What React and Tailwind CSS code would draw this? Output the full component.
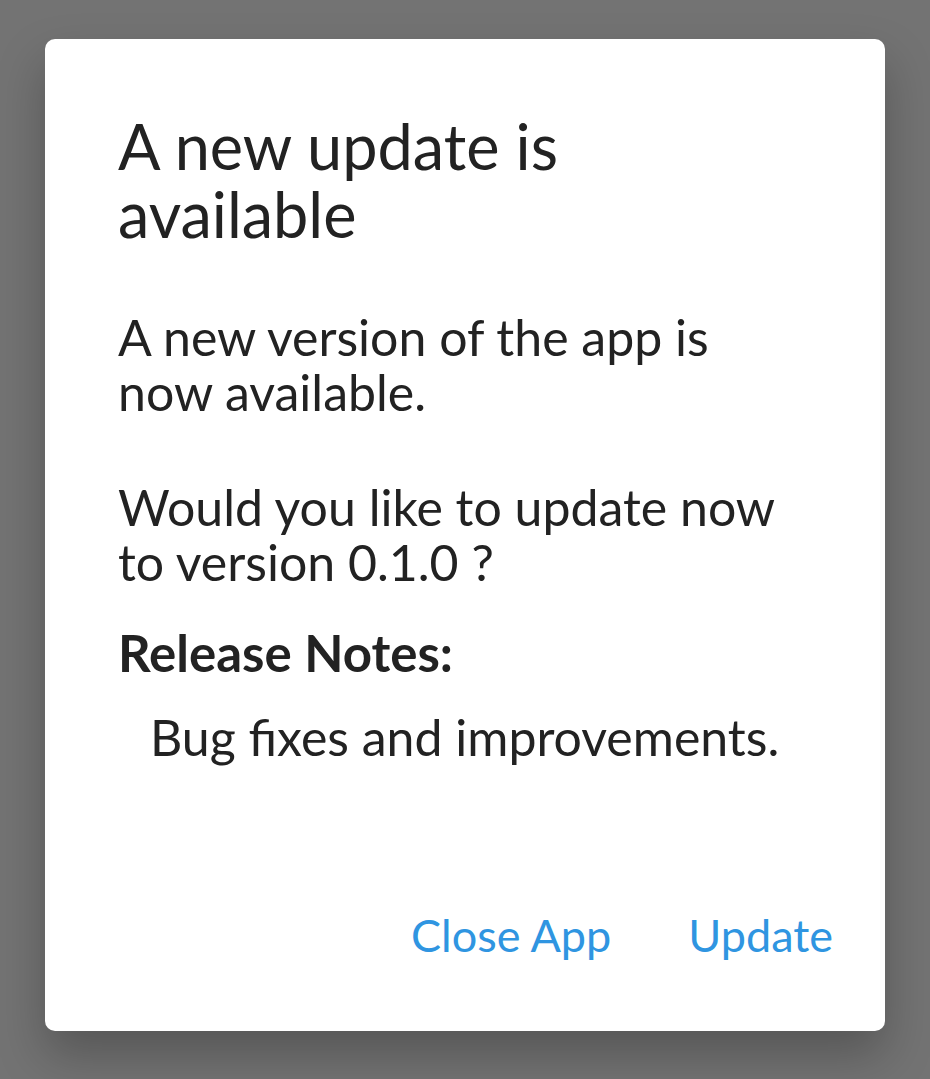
import React from "react";

export default function App() {
  return (
    <div
      className="w-[930px] h-[1079px] bg-[#737373] pt-[39px] pl-[45px] overflow-hidden"
      style={{ fontFamily: "Lato, 'Noto Sans', sans-serif" }}
    >
      <div className="w-[840px] h-[992px] bg-white rounded-[10px] shadow-[0_24px_48px_rgba(0,0,0,0.25)] flex flex-col pl-[73px] pr-[52px] pt-[73px] text-[#222222]">
        <h1 className="text-[63px] leading-[68px] font-normal">
          A new update is
          <br />
          available
        </h1>
        <p className="mt-[62px] text-[50px] leading-[55px]">
          A new version of the app is
          <br />
          now available.
        </p>
        <p className="mt-[60px] text-[50px] leading-[55px]">
          Would you like to update now
          <br />
          to version 0.1.0 ?
        </p>
        <p className="mt-[35px] text-[51px] leading-[55px] font-bold">Release Notes:</p>
        <p className="mt-[30px] pl-[32px] text-[50px] leading-[55px]">Bug fixes and improvements.</p>
        <div className="mt-auto mb-[71px] flex justify-end gap-[77px] text-[45px] leading-[50px] text-[#2f95e1]">
          <button>Close App</button>
          <button>Update</button>
        </div>
      </div>
    </div>
  );
}
